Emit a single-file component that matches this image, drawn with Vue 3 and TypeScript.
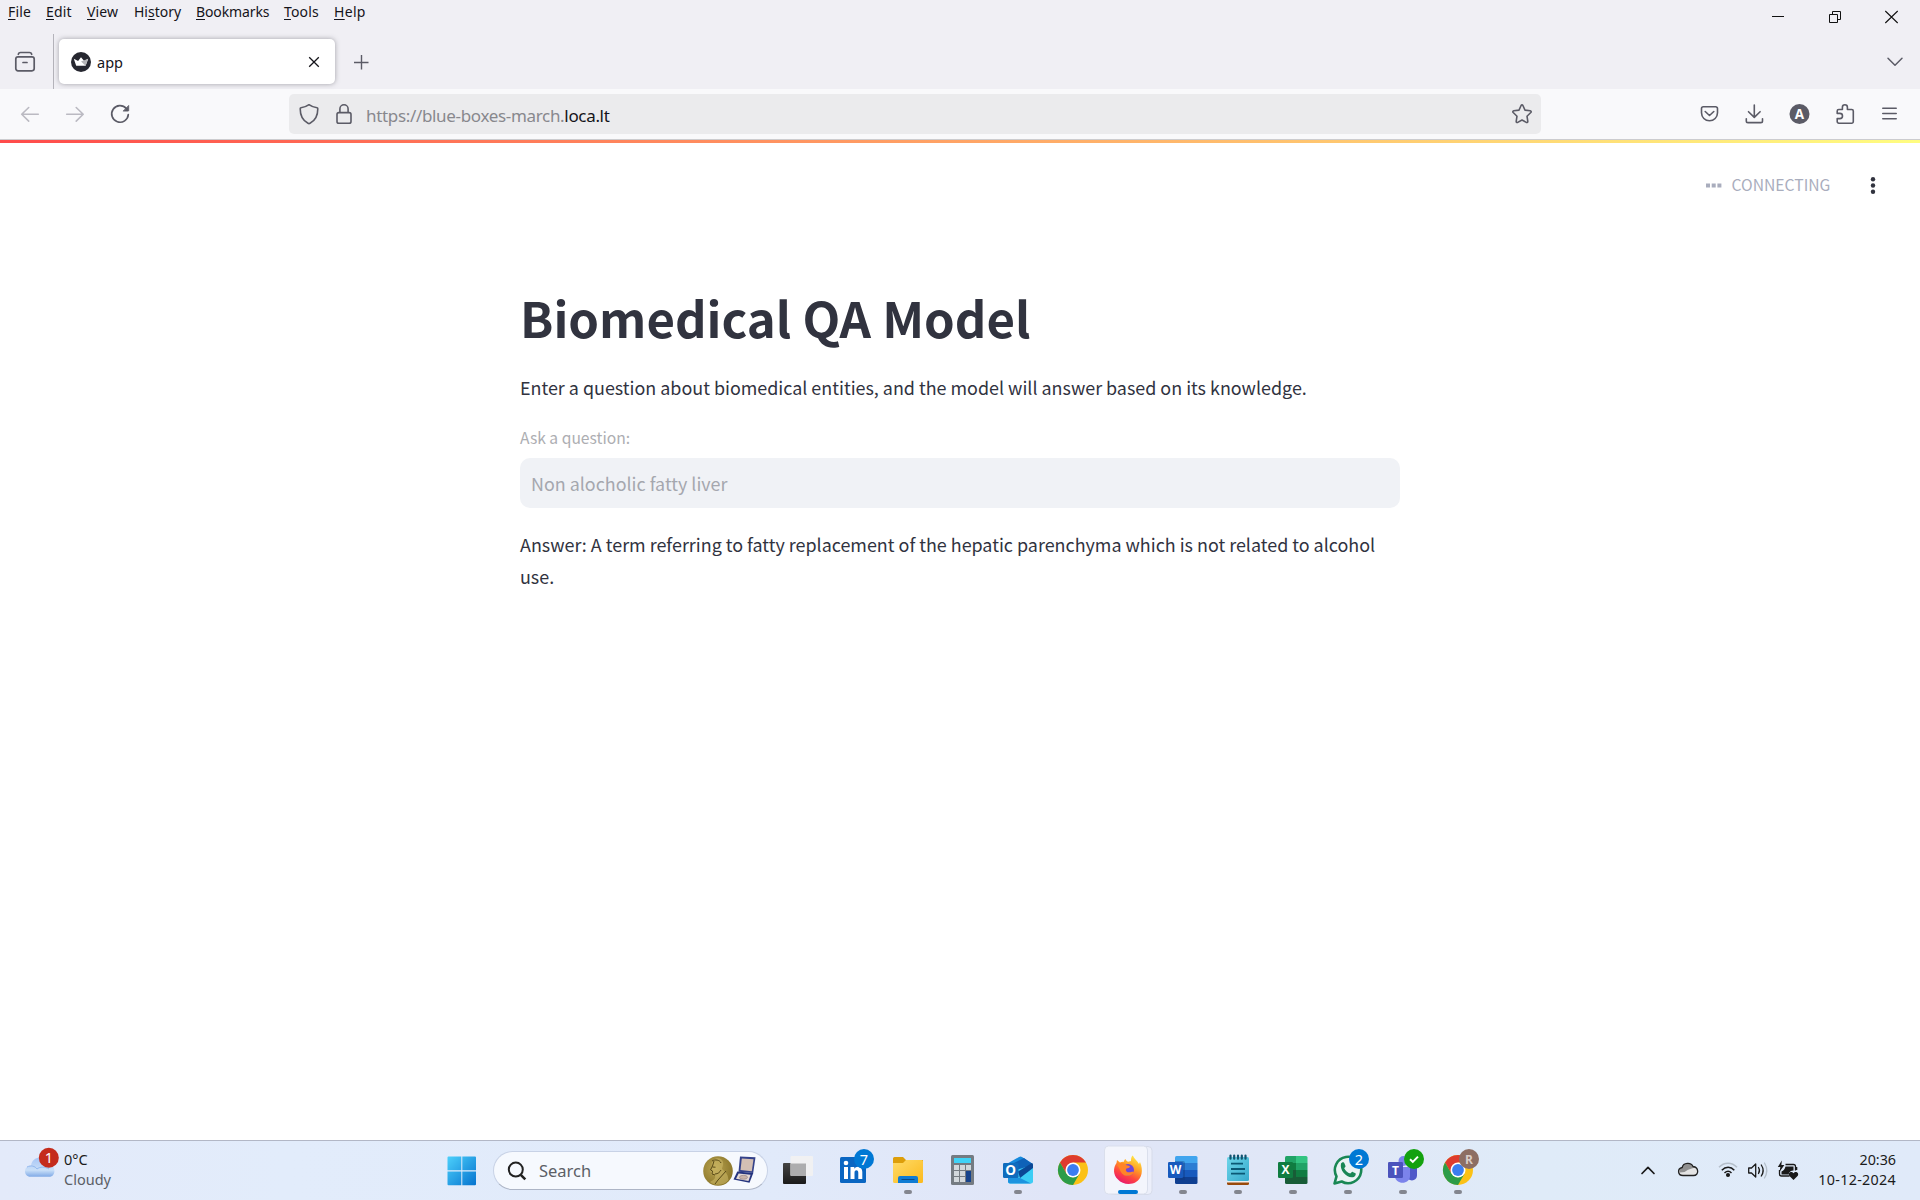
<script setup lang="ts">
interface MenuEntry {
  before: string
  key: string
  after: string
  width: number
  spacing: number
}

const menus: MenuEntry[] = [
  { before: '', key: 'F', after: 'ile', width: 38, spacing: 0.2 },
  { before: '', key: 'E', after: 'dit', width: 41, spacing: 0.2 },
  { before: '', key: 'V', after: 'iew', width: 47, spacing: 0.1 },
  { before: 'Hi', key: 's', after: 'tory', width: 62, spacing: 0 },
  { before: '', key: 'B', after: 'ookmarks', width: 88, spacing: -0.12 },
  { before: '', key: 'T', after: 'ools', width: 50, spacing: 0.15 },
  { before: '', key: 'H', after: 'elp', width: 50, spacing: 0.3 },
]

const question = 'Non alocholic fatty liver'
const answer =
  'A term referring to fatty replacement of the hepatic parenchyma which is not related to alcohol use.'
</script>

<template>
  <div class="screen">
    <header class="chrome">
      <div class="titlebar">
        <nav class="menus">
          <span
            v-for="m in menus"
            :key="m.key + m.after"
            class="menu"
            :style="{ width: m.width + 'px', letterSpacing: m.spacing + 'px' }"
          >{{ m.before }}<u>{{ m.key }}</u>{{ m.after }}</span>
        </nav>
        <div class="controls">
          <svg width="57" height="34"><path d="M23 16.500h12" stroke="#111" fill="none" /></svg>
          <svg width="57" height="34">
            <path d="M23.500 14.500h8v8h-8zM26.500 14.500v-3h8v8h-3" stroke="#111" fill="none" />
          </svg>
          <svg width="57" height="34"><path d="M22.300 11l12.400 12M34.700 11l-12.400 12" stroke="#111" stroke-width="1.100" fill="none" /></svg>
        </div>
      </div>

      <div class="tabstrip">
        <div class="viewbtn">
          <svg width="22" height="22" viewBox="0 0 22 22" fill="none" stroke="#5b5b66" stroke-width="1.700" stroke-linecap="round">
            <path d="M4.300 3.300c.4-1.500 1.200-1.800 2.200-1.800h9c1 0 1.800.3 2.200 1.800" />
            <rect x="1.800" y="5.800" width="18.400" height="14" rx="2.200" />
            <path d="M9 11.500h4" />
          </svg>
        </div>
        <div class="tab">
          <svg class="favicon" width="20" height="20" viewBox="0 0 20 20">
            <circle cx="10" cy="10" r="10" fill="#262730" />
            <path d="M2.800 6.700l4.300 2.300L10 5.200l3.200 3.800 4-2.200-2.600 7H5.200z" fill="#fff" />
            <path d="M10 9.500l7.200-2.700-2.600 7z" fill="#b5b5b8" />
          </svg>
          <span class="tabtitle">app</span>
          <svg width="12" height="12" viewBox="0 0 12 12"><path d="M1.200 1.200l9.600 9.600M10.800 1.200L1.200 10.800" stroke="#15141a" stroke-width="1.300" /></svg>
        </div>
        <svg class="plus" width="16" height="16" viewBox="0 0 16 16"><path d="M8.500 1v14.500M1 8.500h14.500" stroke="#5b5b66" stroke-width="1.400" /></svg>
        <svg class="alltabs" width="18" height="12" viewBox="0 0 18 12"><path d="M2 2.200l7 7 7-7" fill="none" stroke="#5b5b66" stroke-width="1.500" stroke-linecap="round" stroke-linejoin="round" /></svg>
      </div>

      <div class="navbar">
        <div class="navbtns">
          <svg width="45" height="50" fill="none" stroke="#bbbac2" stroke-width="1.600" stroke-linecap="round" stroke-linejoin="round"><path d="M38.300 25.300H22M28.700 18.500l-7 6.800 7 6.800" /></svg>
          <svg width="45" height="50" fill="none" stroke="#bbbac2" stroke-width="1.600" stroke-linecap="round" stroke-linejoin="round"><path d="M21.700 25.300h16.200M31.200 18.500l7 6.800-7 6.800" /></svg>
          <svg width="45" height="50" fill="none" stroke="#5b5b66" stroke-width="1.700" stroke-linecap="round">
            <path d="M36.300 19.500a8.300 8.300 0 1 0 2 6" />
            <path d="M38.700 16.800v4.700a.6.600 0 0 1-.6.600h-4.600z" fill="#5b5b66" stroke-width=".8" stroke-linejoin="round" />
          </svg>
        </div>
        <div class="urlbar">
          <svg width="20" height="22" viewBox="0 0 20 22" fill="none" stroke="#5b5b66" stroke-width="1.600" stroke-linejoin="round">
            <path d="M10 1.700c2.500 1.800 5 2.700 8 3.100.7.100.8.500.8 1 0 6.500-2 11.600-7.800 14.500a2 2 0 0 1-2 0C3.200 17.400 1.200 12.300 1.200 5.800c0-.5.100-.9.800-1C5 4.400 7.500 3.500 10 1.700z" />
          </svg>
          <svg class="lock" width="18" height="22" viewBox="0 0 18 22" fill="none" stroke="#5b5b66" stroke-width="1.600">
            <rect x="2" y="9.600" width="14" height="10.600" rx="1.800" />
            <path d="M4.900 9.600V5.900a4.100 4.100 0 0 1 8.200 0v3.700" />
          </svg>
          <span class="url">https://blue-boxes-march.<b>loca.lt</b></span>
          <svg class="star" width="22" height="22" viewBox="0 0 22 22" fill="none" stroke="#5b5b66" stroke-width="1.600" stroke-linejoin="round">
            <path d="M10.100 2.500q.9-1.500 1.800 0l2.100 4.600 5.200.7q1.600.4.600 1.700l-3.800 3.700.8 5.200q0 1.600-1.500 1L11 17l-4.300 2.400q-1.500.6-1.500-1l.8-5.200-3.800-3.700q-1-1.300.6-1.700l5.200-.7z" />
          </svg>
        </div>
        <div class="actions">
          <svg width="45" height="50" fill="none" stroke="#5b5b66" stroke-width="1.600" stroke-linecap="round" stroke-linejoin="round">
            <path d="M16.300 17.800h12.400a1.800 1.800 0 0 1 1.800 1.800v4.200a8 8 0 0 1-16 0v-4.200a1.800 1.800 0 0 1 1.800-1.800z" /><path d="M18.200 22.500l4.300 4 4.300-4" />
          </svg>
          <svg width="45" height="50" fill="none" stroke="#5b5b66" stroke-width="1.600" stroke-linecap="round" stroke-linejoin="round">
            <path d="M22.300 16v12.300M16.500 22.700l5.800 5.700 5.800-5.700" /><path d="M14.300 29.700v2.200c0 1 .8 1.700 1.700 1.700h12.800c.9 0 1.700-.7 1.700-1.700v-2.200" />
          </svg>
          <svg width="45" height="50">
            <circle cx="22.500" cy="25" r="10" fill="#5b5b66" />
            <text x="22.500" y="29.800" text-anchor="middle" class="avatar">A</text>
          </svg>
          <svg width="45" height="50" fill="none" stroke="#5b5b66" stroke-width="1.600" stroke-linejoin="round">
            <path d="M20.400 20.500v-2.300a2.500 2.500 0 0 1 5 0v2.300h4.300a1.600 1.600 0 0 1 1.600 1.600v10.500a1.600 1.600 0 0 1-1.600 1.600H16.800a1.600 1.600 0 0 1-1.600-1.600v-3h2.700a2.600 2.600 0 0 0 0-5.200h-2.700v-2.300a1.600 1.600 0 0 1 1.600-1.600z" />
          </svg>
          <svg width="45" height="50" fill="none" stroke="#5b5b66" stroke-width="1.600" stroke-linecap="round"><path d="M15.800 19.300h13.400M15.800 24.500h13.400M15.800 29.700h13.400" /></svg>
        </div>
      </div>
    </header>

    <main class="page">
      <div class="decoration"></div>
      <div class="toolbar">
        <svg width="16" height="5" viewBox="0 0 16 5" fill="#a9adbd"><rect x="0" y=".5" width="4" height="4" /><rect x="5.700" y=".5" width="4" height="4" /><rect x="11.400" y=".5" width="4" height="4" /></svg>
        <span class="status">CONNECTING</span>
        <svg width="6" height="20" viewBox="0 0 6 20" fill="#31333f"><circle cx="3" cy="4.300" r="2.200" /><circle cx="3" cy="10.500" r="2.200" /><circle cx="3" cy="16.800" r="2.200" /></svg>
      </div>
      <section class="block">
        <h1>Biomedical QA Model</h1>
        <p class="intro">Enter a question about biomedical entities, and the model will answer based on its knowledge.</p>
        <div class="label">Ask a question:</div>
        <div class="field">{{ question }}</div>
        <p class="answer">Answer: {{ answer }}</p>
      </section>
    </main>

    <footer class="taskbar">
      <svg width="0" height="0" class="defs">
        <defs>
          <linearGradient id="win" x1="0" y1="0" x2="1" y2="1"><stop offset="0" stop-color="#4cd0fb" /><stop offset="1" stop-color="#0573cf" /></linearGradient>
          <linearGradient id="cloud" x1="0" y1="0" x2="0" y2="1"><stop offset="0" stop-color="#a9c6f5" /><stop offset=".65" stop-color="#c9dff8" /><stop offset="1" stop-color="#7fa9e6" /></linearGradient>
          <radialGradient id="gold" cx=".4" cy=".4" r=".7"><stop offset="0" stop-color="#b9a350" /><stop offset="1" stop-color="#857126" /></radialGradient>
          <linearGradient id="folder" x1="0" y1="0" x2="1" y2="1"><stop offset="0" stop-color="#ffdb68" /><stop offset="1" stop-color="#fbb91c" /></linearGradient>
          <linearGradient id="fox" x1=".8" y1="0" x2=".3" y2="1"><stop offset="0" stop-color="#fff04a" /><stop offset=".4" stop-color="#ff9d24" /><stop offset=".7" stop-color="#ff4540" /><stop offset="1" stop-color="#e6156f" /></linearGradient>
          <linearGradient id="cyan" x1="0" y1="0" x2="1" y2="1"><stop offset="0" stop-color="#6fd6ea" /><stop offset="1" stop-color="#36a9cc" /></linearGradient>
          <linearGradient id="dark" x1="0" y1="0" x2="0" y2="1"><stop offset="0" stop-color="#444" /><stop offset="1" stop-color="#1a1a1a" /></linearGradient>
          <g id="chromeball">
            <circle cx="28" cy="29" r="15" fill="#fbc116" />
            <path d="M15 21.500a15 15 0 0 1 26 0H28l-6.500 11.300z" fill="#de3b2e" />
            <path d="M15 21.500A15 15 0 0 0 28 44l6.500-11.300L28 36.500l-6.500-3.700z" fill="#2c9c48" />
            <circle cx="28" cy="29" r="7.500" fill="#fff" />
            <circle cx="28" cy="29" r="5.900" fill="#3b7df0" />
          </g>
        </defs>
      </svg>

      <div class="weather">
        <svg width="40" height="59" viewBox="20 0 40 59">
          <path d="M30.500 35.800c-7.200 0-7.500-11 .5-11 1.200-10 14-10.500 16.500-1.800 8-.7 9.800 12.800 1.500 12.800z" fill="url(#cloud)" />
          <path d="M27 26c4-2 8-1 10 2 3-2.500 8-2.500 12 0" fill="none" stroke="#8db3ec" stroke-width=".9" />
          <circle cx="48.800" cy="16.700" r="10" fill="#c42b1c" />
          <text x="48.800" y="22" text-anchor="middle" class="badgetext">1</text>
        </svg>
        <div class="weathertext"><span class="temp">0°C</span><span class="cond">Cloudy</span></div>
      </div>

      <div class="dock">
        <svg class="start" width="30" height="30" viewBox="0 0 30 30"><path d="M.5 1.500q0-1 1-1h12.800v13.800H.5zM15.300.500h12.700q1 0 1 1v12.800H15.300zM.5 15.500h13.800v13.800H1.500q-1 0-1-1zM15.300 15.500H29v12.800q0 1-1 1H15.300z" fill="url(#win)" /></svg>
        <div class="search">
          <svg width="20" height="20" viewBox="0 0 20 20" fill="none" stroke="#222"><circle cx="8.800" cy="8.600" r="7" stroke-width="2" /><path d="M13.800 13.800l4.500 4.500" stroke-width="2.600" /></svg>
          <span>Search</span>
          <svg class="nobel" width="56" height="32" viewBox="0 0 56 32">
            <circle cx="16" cy="16" r="14.800" fill="url(#gold)" />
            <path d="M11 5c4-3 9-2 10 2 .8 3-1 5-1 7 3 3 6 4 6.500 11C22 31 12 31 8 27c3-2 6-3 5-7-3 .5-4.500-.5-4-3l-1.200-1.200L10 12c-.6-3-.5-5 1-7z" fill="#d0bb6a" opacity=".55" />
            <path d="M10 6c3-2 8-1 9 2M10.500 12l3 .2M13 19c3 0 5-2 6-4M24 16l-8 9-3 4M12 6l-1.500 5-2 4 2 1-.5 3 3 1" fill="none" stroke="#594a17" stroke-width="1" />
            <path d="M38 1.500l15.500.8-2.300 15.700-14.700-1.200z" fill="#34428a" />
            <path d="M39.800 3.600l11.700.7-1.700 12-11.300-1.300z" fill="#d3bfb4" />
            <path d="M35.300 16.500l16 1.500-3.800 9.800-16-3.200z" fill="#25347e" />
            <path d="M36.600 18.500l12 1.200-2.100 6.200-12.500-2.200z" fill="#e4d9d5" />
            <ellipse cx="41.500" cy="22.300" rx="4" ry="2" fill="#c9b3a9" stroke="#8c7d82" stroke-width=".6" />
          </svg>
        </div>

        <svg class="app" viewBox="0 0 55 59">
          <rect x="13" y="22" width="23" height="21" rx="1" fill="url(#dark)" />
          <rect x="20.500" y="15" width="22.500" height="20" rx="1" fill="#f1f1f2" />
          <path d="M20.500 22.500H36V35H21.500q-1 0-1-1z" fill="#adadae" />
        </svg>
        <svg class="app" viewBox="0 0 55 59">
          <rect x="15" y="16" width="26" height="26" rx="1.500" fill="#0a66c2" />
          <circle cx="21" cy="22" r="2.300" fill="#fff" />
          <path d="M19 26h4v12h-4zM25.500 26h3.800v1.700c1.900-3.200 8-2.800 8 3.300v7h-4v-6.300c0-3.200-3.800-3-3.800 0V38h-4z" fill="#fff" />
          <circle cx="39" cy="18" r="10" fill="#0078d4" />
          <text x="39" y="23.500" text-anchor="middle" class="badgetext">7</text>
        </svg>
        <svg class="app" viewBox="0 0 55 59">
          <path d="M13 17.500q0-1.500 1.500-1.500H23l3 3H43v10H13z" fill="#dd9e0a" />
          <path d="M13 22h10l3-3h15.500q1.500 0 1.500 1.500v20q0 1.500-1.500 1.500h-27Q13 42 13 40.500z" fill="url(#folder)" />
          <path d="M18 42v-5q0-2 2-2h16q2 0 2 2v5z" fill="#0f7bd3" />
          <path d="M21.500 38.500h13" stroke="#0a4a86" />
          <rect x="24" y="49" width="8" height="4" rx="2" fill="#83868f" />
        </svg>
        <svg class="app" viewBox="0 0 55 59">
          <rect x="16" y="14" width="23" height="30" rx="1.500" fill="#747b82" />
          <rect x="19" y="17" width="17" height="5" fill="#40d3f7" />
          <path d="M19 24h5v5h-5zM25 24h5v5h-5zM31 24h5v5h-5zM19 30h5v5h-5zM25 30h5v5h-5zM19 36h5v5h-5zM25 36h5v5h-5z" fill="#d2d8dc" />
          <path d="M31 30h5v11h-5z" fill="#16438c" />
        </svg>
        <svg class="app" viewBox="0 0 55 59">
          <path d="M17.500 22.500L29 16q1.500-.8 3 0l11 7-13 11-12-3z" fill="#1689dc" />
          <path d="M24 22l10-5 9 6.500-13 8z" fill="#0f62b8" />
          <path d="M19 31l24-7v16.500q0 2-2 2H20q-2 0-2-2z" fill="#3ccdf5" />
          <path d="M28 30.500l14-8.500 1 1.500v3.500L30 37z" fill="#0b4795" />
          <path d="M18 37l12 0 11 5.500H20q-2 0-2-2z" fill="#1c93df" />
          <rect x="13" y="22" width="15.500" height="15" rx="1.200" fill="#0f6cbd" />
          <text x="20.700" y="34.200" text-anchor="middle" class="letter">O</text>
          <rect x="24" y="49" width="8" height="4" rx="2" fill="#83868f" />
        </svg>
        <svg class="app" viewBox="0 0 55 59"><use href="#chromeball" /></svg>
        <svg class="app" viewBox="0 0 55 59">
          <rect x="9.500" y="5.500" width="42.500" height="48" rx="4" fill="#eceffa" stroke="#d6dbea" />
          <rect x="4.500" y="5" width="43" height="48" rx="4" fill="#f3f5fc" stroke="#dadfec" />
          <path d="M31 20c0-3 .5-4.500 1.800-5.500 1.200 3.500 4.500 5 6.200 8.500l1-2c3.500 8 2 16.500-4 20-6 3.600-14 2-18-2.500C13 34 13 27 16.500 22l.5-3 3 2.500c1.300-.8 2.600-1 4-.8 0-1.200.5-2 1.500-2.700.5 1.500 1.500 2 2.500 2.700z" fill="url(#fox)" />
          <circle cx="28" cy="29" r="6" fill="#7047d8" />
          <path d="M17 24c3-3 7-2.500 9.500.2 1.800.2 3.500.6 3.500 1.500-.5 1.300-2.500 1.300-3.500 1.800-1.500 1.500 0 4 2.500 3.800 2 0 3.500-1 5-.4-2 4.500-8.500 5-11.500 2-3-2.800-2.500-6-5.500-8.900z" fill="#ff8428" />
          <rect x="18" y="49" width="20" height="4" rx="2" fill="#0078d4" />
        </svg>
        <svg class="app" viewBox="0 0 55 59">
          <path d="M20 22v-5.500q0-1.500 1.500-1.500H41q1.500 0 1.500 1.500V22z" fill="#41a5ee" /><path d="M20 22h22.500v7H20z" fill="#2b7cd3" /><path d="M20 29h22.500v7H20z" fill="#185abd" /><path d="M20 36h22.500v5.500q0 1.500-1.500 1.500H21.500q-1.500 0-1.500-1.500z" fill="#103f91" />
          <path d="M20 20h8q2 0 2 2v17H20z" fill="#0d3576" opacity=".35" />
          <rect x="13" y="21" width="15" height="16" rx="1.200" fill="#185abd" />
          <text x="20.500" y="33.200" text-anchor="middle" class="letter small">W</text>
          <rect x="24" y="49" width="8" height="4" rx="2" fill="#83868f" />
        </svg>
        <svg class="app" viewBox="0 0 55 59">
          <path d="M17 40h22v2.500q0 1.500-1.500 1.500h-19Q17 44 17 42.500z" fill="#994a0c" />
          <path d="M17 39h22v2.500H17z" fill="#eee" />
          <rect x="17" y="16" width="22" height="24" rx="1.500" fill="url(#cyan)" />
          <path d="M20.500 14.500v3.200M24.200 14.500v3.200M28 14.500v3.200M31.800 14.500v3.200M35.500 14.500v3.200" stroke="#125470" stroke-width="2.200" stroke-linecap="round" />
          <path d="M21 22.700h12M21 28h14M21 32.700h14" stroke="#0b5875" stroke-width="1.800" />
          <rect x="24" y="49" width="8" height="4" rx="2" fill="#83868f" />
        </svg>
        <svg class="app" viewBox="0 0 55 59">
          <path d="M20 22v-5.500q0-1.500 1.500-1.500H31v7z" fill="#21a366" /><path d="M31 15h10q1.500 0 1.500 1.500V22H31z" fill="#33c481" /><path d="M31 22h11.500v7H31z" fill="#21a366" /><path d="M20 22h11v7H20z" fill="#107c41" /><path d="M20 29h11v7H20z" fill="#185c37" /><path d="M31 29h11.500v7H31z" fill="#107c41" /><path d="M20 36h22.500v5.500q0 1.500-1.500 1.500H21.500q-1.500 0-1.500-1.500z" fill="#185c37" />
          <rect x="13" y="21" width="15" height="16" rx="1.200" fill="#107c41" />
          <text x="20.500" y="33.200" text-anchor="middle" class="letter small">X</text>
          <rect x="24" y="49" width="8" height="4" rx="2" fill="#83868f" />
        </svg>
        <svg class="app" viewBox="0 0 55 59">
          <path d="M14.500 42.500l2-7.200a13.200 13.200 0 1 1 5.200 5.200z" fill="#eaf3f4" stroke="#198754" stroke-width="2.600" stroke-linejoin="round" />
          <path d="M21 22.500c1.500-2 3-1.500 3.500 0l1 2.500c.2 1-1 1.500-1.300 2.300 1.300 2.700 3.200 4.300 6 5.200 1-.6 1.600-2 2.600-1.600l2.600 1.300c1 .6-.2 3.300-1.600 3.800-6.500 2-14.500-6.500-12.800-13.500z" fill="#198754" />
          <circle cx="39" cy="18" r="10" fill="#0078d4" />
          <text x="39" y="23.500" text-anchor="middle" class="badgetext">2</text>
          <rect x="24" y="49" width="8" height="4" rx="2" fill="#83868f" />
        </svg>
        <svg class="app" viewBox="0 0 55 59">
          <circle cx="28.500" cy="20" r="5" fill="#7b83eb" />
          <path d="M33 26h9v8c0 5-5 7-9 4z" fill="#5059c9" />
          <path d="M20 26h15v9c0 9-15 9-15 0z" fill="#7b83eb" />
          <rect x="13" y="21" width="15" height="16" rx="1.200" fill="#4b53bc" />
          <text x="20.500" y="33.500" text-anchor="middle" class="letter small">T</text>
          <circle cx="39" cy="18" r="10" fill="#13a10e" />
          <path d="M35 18.200l2.800 2.700 5.200-5.300" fill="none" stroke="#fff" stroke-width="2" />
          <rect x="24" y="49" width="8" height="4" rx="2" fill="#83868f" />
        </svg>
        <svg class="app" viewBox="0 0 55 59">
          <use href="#chromeball" />
          <circle cx="39" cy="18" r="10" fill="#8d6e63" />
          <text x="39" y="22.500" text-anchor="middle" class="initial">R</text>
          <rect x="24" y="49" width="8" height="4" rx="2" fill="#83868f" />
        </svg>
      </div>

      <div class="tray">
        <svg width="34" height="59" viewBox="1632 0 34 59"><path d="M1642 32.500l6-6.200 6 6.200" fill="none" stroke="#1a1a1a" stroke-width="1.700" stroke-linecap="round" stroke-linejoin="round" /></svg>
        <svg width="44" height="59" viewBox="1666 0 44 59">
          <path d="M1683 34.500c-5.500 0-6-7-.8-8 1-5 9-5.500 10.800-1 6 .8 6.300 9 .5 9z" fill="#e4e4e4" />
          <path d="M1682.200 26.500c1-5 9-5.500 10.800-1l2.500.8-7.500 2.400-3.500 2.300-4.800.5c-.5-2.500.5-4.500 2.500-5z" fill="#909090" />
          <path d="M1683 34.500c-5.500 0-6-7-.8-8 1-5 9-5.500 10.800-1 6 .8 6.300 9 .5 9z" fill="none" stroke="#222" stroke-width="1.300" />
        </svg>
        <svg width="32" height="59" viewBox="1710 0 32 59" fill="none" stroke="#1a1a1a" stroke-width="1.500">
          <path d="M1719 26.300c5-5.400 13-5.400 18 0" stroke="#b5bfca" />
          <path d="M1721.800 29.200c3.700-3.800 9-3.800 12.500 0M1724.500 32c2.200-2 5-2 7 0" />
          <circle cx="1728" cy="34" r="1.300" fill="#1a1a1a" />
        </svg>
        <svg width="32" height="59" viewBox="1742 0 32 59" fill="none" stroke="#1a1a1a" stroke-width="1.300" stroke-linecap="round" stroke-linejoin="round">
          <path d="M1748.700 27h2.800l4.200-4v13l-4.200-4h-2.800z" />
          <path d="M1758.500 26.500q2 3 0 6M1761.300 24q3.700 5.500 0 11" />
          <path d="M1764.500 22q4.600 7.500 0 15" stroke="#b5bfca" />
        </svg>
        <svg width="32" height="59" viewBox="1774 0 32 59">
          <path d="M1785.500 23.500h8q2 0 2 2v4M1779.500 29v4q0 2 2 2h8" fill="none" stroke="#1a1a1a" stroke-width="1.300" />
          <path d="M1785.500 25.500h8v4q-4 0-5 4h-7v-3q3-1 4-5z" fill="#1a1a1a" />
          <path d="M1795.500 26h1.800v3h-1.800zM1781.800 19.500l-4 6.500h2.600l-1 5 5-7h-3z" fill="#1a1a1a" />
          <path d="M1793.500 39l-4.300-4.300c-1.700-3.300 2.500-5.300 4.300-2.400 1.800-2.900 6-.9 4.300 2.400z" fill="#1a1a1a" />
        </svg>
        <div class="clock"><span>20:36</span><span class="date">10-12-2024</span></div>
      </div>
    </footer>
  </div>
</template>

<style>
html,
body {
  margin: 0;
  background: #fff;
}
</style>

<style scoped>
.screen {
  width: 1920px;
  height: 1200px;
  display: flex;
  flex-direction: column;
  overflow: hidden;
  font-family: 'Noto Sans', 'Open Sans', sans-serif;
}
svg {
  display: block;
  flex: none;
}
.chrome {
  height: 140px;
  flex: none;
  background: #f0eff4;
}
.titlebar {
  height: 34px;
  display: flex;
  justify-content: space-between;
}
.menus {
  display: flex;
  padding-left: 8px;
  height: 24px;
  font-size: 14px;
  line-height: 24px;
  color: #15141a;
}
.menu {
  flex: none;
  white-space: nowrap;
}
.menu u {
  text-decoration-thickness: 1px;
  text-underline-offset: 2px;
}
.controls {
  display: flex;
}
.tabstrip {
  height: 55px;
  display: flex;
}
.viewbtn {
  width: 54px;
  border-right: 1px solid #b4b3ba;
  display: flex;
  align-items: center;
  padding-left: 14px;
  box-sizing: border-box;
}
.tab {
  width: 276px;
  height: 45px;
  margin: 5px 0 0 5px;
  box-sizing: border-box;
  padding: 0 15.500px 0 12px;
  border-radius: 5px;
  background: #fff;
  box-shadow: 0 0 5px rgba(80, 80, 90, 0.5);
  display: flex;
  align-items: center;
}
.tabtitle {
  flex: 1;
  margin-left: 6px;
  font-size: 14.500px;
  color: #15141a;
}
.plus {
  margin: 20px 0 0 18px;
}
.alltabs {
  margin: 22px 16px 0 auto;
}
.navbar {
  height: 50px;
  display: flex;
  background: #f9f9fb;
  border-bottom: 1px solid #cccccf;
}
.navbtns {
  width: 289px;
  display: flex;
}
.urlbar {
  width: 1252px;
  height: 40px;
  margin-top: 5px;
  box-sizing: border-box;
  padding: 0 8px 0 10px;
  border-radius: 5px;
  background: #ebebed;
  display: flex;
  align-items: center;
}
.lock {
  margin-left: 16px;
}
.url {
  flex: 1;
  margin-left: 13px;
  padding-top: 3px;
  font-size: 17px;
  letter-spacing: -0.330px;
  color: #88888d;
}
.url b {
  font-weight: 400;
  color: #15141a;
}
.actions {
  display: flex;
  margin-left: auto;
  padding-right: 8px;
}
.avatar {
  font: 700 13.500px 'Open Sans', sans-serif;
  fill: #fff;
}
.page {
  flex: 1;
  font-family: 'Noto Sans CJK JP', 'Noto Sans CJK SC', sans-serif;
  color: #31333f;
}
.decoration {
  height: 3px;
  background: linear-gradient(90deg, #ff4b4b, #fffd80);
}
.toolbar {
  height: 84px;
  display: flex;
  align-items: center;
  justify-content: flex-end;
  padding-right: 44.500px;
}
.status {
  width: 101px;
  margin: -2px 37px 0 9.500px;
  font-size: 15.700px;
  color: #a9adbd;
}
.block {
  width: 880px;
  margin: 52px auto 0;
}
h1 {
  margin: 0;
  height: 75px;
  font-size: 49.100px;
  line-height: 75px;
  font-weight: 700;
}
.intro {
  margin: 17px 0 0;
  font-size: 17.910px;
  line-height: 32px;
}
.label {
  margin-top: 21px;
  height: 28px;
  line-height: 28px;
  font-size: 15.650px;
  color: #adaeb2;
}
.field {
  height: 50px;
  margin-top: 6px;
  line-height: 50px;
  box-sizing: border-box;
  padding-left: 11px;
  border-radius: 10px;
  background: #f0f2f6;
  font-size: 17.900px;
  color: #a5a7ae;
}
.answer {
  margin: 20px 0 0;
  font-size: 17.910px;
  line-height: 32px;
}
.taskbar {
  height: 60px;
  flex: none;
  box-sizing: border-box;
  border-top: 1px solid #b2b7c6;
  background: linear-gradient(90deg, #e3eafa 0, #e2ecfb 15%, #e1eafa 40%, #e0e5f7 55%, #e0e7f7 68%, #dfebf8 80%, #e0eaf9 100%);
  display: flex;
}
.defs {
  position: absolute;
}
.weather {
  width: 446px;
  padding-left: 20px;
  box-sizing: border-box;
  display: flex;
}
.weathertext {
  display: flex;
  flex-direction: column;
  margin-left: 4px;
  padding-top: 8px;
  font-size: 14.500px;
  line-height: 20px;
}
.temp {
  color: #1b1b1b;
}
.cond {
  color: #5b5e66;
}
.badgetext {
  font: 14.500px 'Noto Sans', sans-serif;
  fill: #fff;
}
.letter {
  font: 700 13.500px 'Open Sans', sans-serif;
  fill: #fff;
}
.small {
  font-size: 12px;
}
.initial {
  font: 700 12px 'Open Sans', sans-serif;
  fill: #d9ccc7;
}
.dock {
  width: 1039px;
  display: flex;
}
.start {
  margin: 15px 0 0 1px;
}
.search {
  width: 275px;
  height: 39px;
  margin: 10px 2px 0 16px;
  box-sizing: border-box;
  border: 1px solid #c8d2e6;
  border-bottom-color: #adb5c6;
  border-radius: 20px;
  background: #f6f9fe;
  display: flex;
  align-items: center;
  padding: 0 9px 0 13px;
  font-size: 16.500px;
  color: #5c5f66;
}
.search span {
  flex: 1;
  margin-left: 12px;
}
.app {
  width: 55px;
  height: 59px;
}
.tray {
  flex: 1;
  display: flex;
  margin-left: 147px;
  padding-right: 24px;
}
.clock {
  flex: 1;
  padding-top: 9px;
  display: flex;
  flex-direction: column;
  align-items: flex-end;
  font-size: 14.300px;
  line-height: 20px;
  color: #1b1b1b;
}
.date {
  letter-spacing: 0.300px;
}
</style>
